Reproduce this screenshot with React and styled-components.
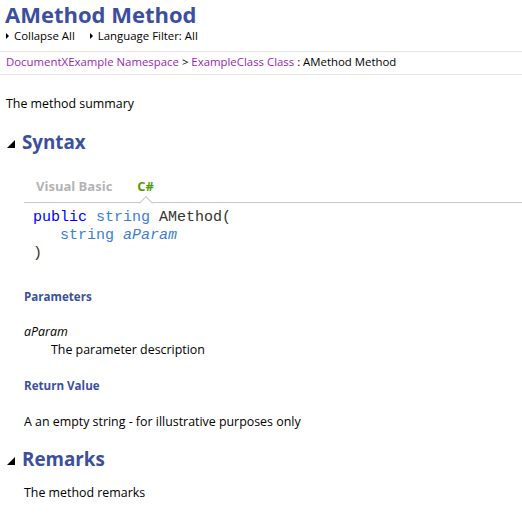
import React from "react";
import styled, { createGlobalStyle } from "styled-components";

const Global = createGlobalStyle`
  html, body { margin: 0; padding: 0; background: #fff; }
  body { font-family: "Open Sans", "Noto Sans", sans-serif; color: #000; font-size: 11.4px; }
`;

const Page = styled.div`
  width: 522px;
  min-height: 516px;
`;

const Title = styled.h1`
  margin: 0;
  padding: 1px 5px 0;
  font-size: 22px;
  line-height: 27px;
  font-weight: 700;
  color: #3b4f9e;
`;

const Toolbar = styled.div`
  display: flex;
  gap: 15px;
  padding: 0 6px 7px;
  line-height: 16px;
  border-bottom: 1px solid #e6e6e6;
`;

const ToolItem = styled.span`
  display: inline-flex;
  align-items: center;
  gap: 5px;
`;

const Caret = styled.span`
  width: 0;
  height: 0;
  border-top: 3.5px solid transparent;
  border-bottom: 3.5px solid transparent;
  border-left: 3.5px solid #000;
`;

const Breadcrumb = styled.div`
  padding: 2px 6px 4px;
  line-height: 16px;
  border-bottom: 1px solid #e6e6e6;
  white-space: pre;
`;

const Link = styled.a`
  color: #9a1fb8;
  text-decoration: none;
`;

const Paragraph = styled.p`
  margin: ${(p) => p.$mt || 0}px 0 0;
  padding: 0 ${(p) => p.$pl || 0}px;
  font-size: 12.4px;
  line-height: 16px;
`;

const SectionHead = styled.div`
  display: flex;
  align-items: center;
  gap: 7px;
  padding-left: 7px;
  margin-top: ${(p) => p.$mt || 0}px;
`;

const Triangle = styled.span`
  width: 0;
  height: 0;
  border-left: 8px solid transparent;
  border-bottom: 8px solid #000;
  margin-top: 4px;
`;

const SectionTitle = styled.h2`
  margin: 0;
  font-size: 18.8px;
  line-height: 26px;
  font-weight: 700;
  color: #3b4f9e;
`;

const Body = styled.div`
  padding-left: 24px;
`;

const Tabs = styled.div`
  display: flex;
  gap: 25px;
  margin-top: 22px;
  padding: 0 0 7px 12px;
  line-height: 18px;
  border-bottom: 1px solid #c8c8c8;
`;

const Tab = styled.span`
  font-size: 13px;
  font-weight: 700;
  color: ${(p) => (p.$active ? "#559c00" : "#b4b4b4")};
  position: relative;
`;

const Notch = styled.span`
  position: absolute;
  left: 50%;
  bottom: -13px;
  box-sizing: border-box;
  width: 10px;
  height: 10px;
  background: #fff;
  border-left: 1px solid #c8c8c8;
  border-top: 1px solid #c8c8c8;
  transform: translateX(-50%) rotate(45deg);
`;

const Code = styled.pre`
  margin: 0;
  padding: 6px 9px 0;
  font-family: "Liberation Mono", "Courier New", monospace;
  font-size: 15px;
  line-height: 18px;
  color: #333;
`;

const Kw = styled.span`
  color: ${(p) => (p.$type ? "#3a80d2" : "#0000ff")};
`;

const Param = styled.span`
  color: #3a80d2;
  font-style: italic;
`;

const SubHead = styled.h4`
  margin: ${(p) => p.$mt || 0}px 0 0;
  font-size: 11.6px;
  line-height: 16px;
  font-weight: 700;
  color: #3b4f9e;
`;

const ParamList = styled.dl`
  margin: 18px 0 0;
  font-size: 12.4px;
  line-height: 18px;
`;

const Term = styled.dt`
  font-style: italic;
`;

const Def = styled.dd`
  margin: 0;
  padding-left: 27px;
`;

export default function App() {
  return (
    <Page>
      <Global />
      <Title>AMethod Method</Title>
      <Toolbar>
        <ToolItem><Caret />Collapse All</ToolItem>
        <ToolItem><Caret />Language Filter: All</ToolItem>
      </Toolbar>
      <Breadcrumb>
        <Link>DocumentXExample Namespace</Link>
        {" > "}
        <Link>ExampleClass Class</Link>
        {" : AMethod Method"}
      </Breadcrumb>
      <Paragraph $mt={21} $pl={6}>The method summary</Paragraph>
      <SectionHead $mt={17}>
        <Triangle />
        <SectionTitle>Syntax</SectionTitle>
      </SectionHead>
      <Body>
        <Tabs>
          <Tab>Visual Basic</Tab>
          <Tab $active>C#<Notch /></Tab>
        </Tabs>
        <Code>
          <Kw>public</Kw> <Kw $type>string</Kw> AMethod({"\n"}
          {"   "}<Kw $type>string</Kw> <Param>aParam</Param>{"\n"}
          )
        </Code>
        <SubHead $mt={26}>Parameters</SubHead>
        <ParamList>
          <Term>aParam</Term>
          <Def>The parameter description</Def>
        </ParamList>
        <SubHead $mt={19}>Return Value</SubHead>
        <Paragraph $mt={20}>A an empty string - for illustrative purposes only</Paragraph>
      </Body>
      <SectionHead $mt={16}>
        <Triangle />
        <SectionTitle>Remarks</SectionTitle>
      </SectionHead>
      <Body>
        <Paragraph $mt={13}>The method remarks</Paragraph>
      </Body>
    </Page>
  );
}
